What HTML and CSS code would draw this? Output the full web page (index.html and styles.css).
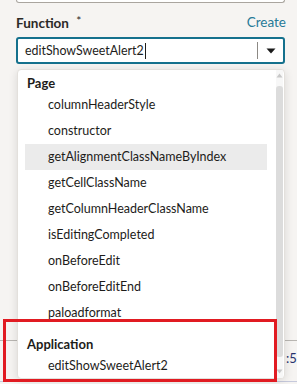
FILE: index.html
```html
<!DOCTYPE html>
<html>
	<head>
		<meta charset="UTF-8"/>
		<title>Function picker</title>
<link rel="stylesheet" href="styles.css">
	</head>
	<body>
		<div class="prev-box"></div>

		<div class="field">
			<div class="field-head">
				<span class="label">Function <span class="req">*</span></span>
				<a class="create">Create</a>
			</div>
			<div class="combo">
				<span class="combo-value">editShowSweetAlert2</span><span class="caret"></span>
				<span class="combo-sep"></span>
				<span class="combo-arrow">
					<svg width="10" height="6" viewBox="0 0 10 6"><path d="M0.5 0.5 L9.5 0.5 L5 5.5 Z" fill="#1a1a1a"/></svg>
				</span>
			</div>
		</div>

		<div class="under">
			<div class="under-row"><span class="under-text">:5</span></div>
		</div>

		<div class="dropdown">
			<div class="list">
				<div class="group-head">Page</div>
				<div class="item">columnHeaderStyle</div>
				<div class="item">constructor</div>
				<div class="item active">getAlignmentClassNameByIndex</div>
				<div class="item">getCellClassName</div>
				<div class="item">getColumnHeaderClassName</div>
				<div class="item">isEditingCompleted</div>
				<div class="item">onBeforeEdit</div>
				<div class="item">onBeforeEditEnd</div>
				<div class="item">paloadformat</div>
				<div class="group-head second">Application</div>
				<div class="item">editShowSweetAlert2</div>
			</div>
			<div class="scrollbar">
				<svg class="sb-arrow" width="7" height="5" viewBox="0 0 7 5"><path d="M0.5 4.5 L3.5 0.5 L6.5 4.5 Z" fill="#c8c8c8"/></svg>
				<div class="sb-thumb"></div>
				<svg class="sb-arrow" width="7" height="5" viewBox="0 0 7 5"><path d="M0.5 0.5 L3.5 4.5 L6.5 0.5 Z" fill="#c8c8c8"/></svg>
			</div>
		</div>

		<div class="highlight-box"></div>
	</body>
</html>
```

FILE: styles.css
```css
body {
	margin: 0;
	width: 297px;
	height: 384px;
	overflow: hidden;
	position: relative;
	background: #f6f4f2;
	font-family: Lato, "Noto Sans", sans-serif;
	color: #1d1c1a;
}

.prev-box {
	margin: 0 12px 0 16px;
	height: 2px;
	border: 1px solid #aaa59f;
	border-top: none;
	border-radius: 0 0 4px 4px;
	background: #fff;
}

.field {
	padding: 10px 12px 0 16px;
}

.field-head {
	display: flex;
	justify-content: space-between;
	align-items: center;
	height: 18px;
}

.label {
	font-size: 13.5px;
	font-weight: 700;
	color: #2b2926;
}

.req {
	font-weight: 400;
	margin-left: 4px;
	font-size: 12px;
	vertical-align: 3px;
}

.create {
	font-size: 13.5px;
	color: #267a98;
	margin-right: -1px;
}

.combo {
	margin-top: 6px;
	height: 23px;
	border: 2px solid #15718d;
	border-radius: 3px;
	background: #fff;
	display: flex;
	align-items: center;
	padding-left: 7px;
}

.combo-value {
	font-size: 12.4px;
	color: #1d1c1a;
}

.caret {
	width: 1px;
	height: 16px;
	background: #1d1c1a;
	margin-left: 1px;
}

.combo-sep {
	margin-left: auto;
	width: 1px;
	height: 17px;
	background: #8c8984;
}

.combo-arrow {
	width: 25px;
	display: flex;
	justify-content: center;
	padding-top: 1px;
}

.under {
	margin-top: 276px;
	height: 40px;
	border-top: 1px solid #b9b6b2;
	border-bottom: 1px solid #c6c9dc;
}

.under-row {
	display: flex;
	justify-content: flex-end;
	padding-top: 9px;
}

.under-text {
	font-size: 13px;
	color: #27326e;
	width: 11px;
}

.dropdown {
	position: absolute;
	left: 17px;
	top: 69px;
	width: 266px;
	height: 308px;
	background: #fff;
	border: 1px solid #e3e0dc;
	border-radius: 4px;
	box-shadow: 0 2px 10px rgba(0, 0, 0, 0.12);
	display: flex;
	overflow: hidden;
}

.list {
	flex: 1;
	padding: 0 9px 0 7px;
}

.group-head {
	font-size: 13px;
	font-weight: 700;
	line-height: 18px;
	padding: 4px 0 0 2px;
	height: 18px;
	color: #1d1c1a;
}

.group-head.second {
	margin-top: 6px;
	padding-top: 3px;
}

.item {
	height: 26px;
	line-height: 26px;
	font-size: 12.5px;
	padding-left: 23px;
	color: #1d1c1a;
}

.item.active {
	background: #ebebeb;
}

.scrollbar {
	width: 7px;
	margin-right: 1px;
	display: flex;
	flex-direction: column;
	align-items: center;
	padding: 3px 0 4px;
	background: #f7f7f7;
}

.sb-arrow {
	flex: none;
}

.sb-thumb {
	flex: 1;
	width: 7px;
	margin: 8px 0 12px;
	background: #dcdcdc;
	border-radius: 3px;
}

.highlight-box {
	position: absolute;
	left: 3px;
	top: 319px;
	width: 268px;
	height: 57px;
	border: 3px solid #e11b22;
}
```
